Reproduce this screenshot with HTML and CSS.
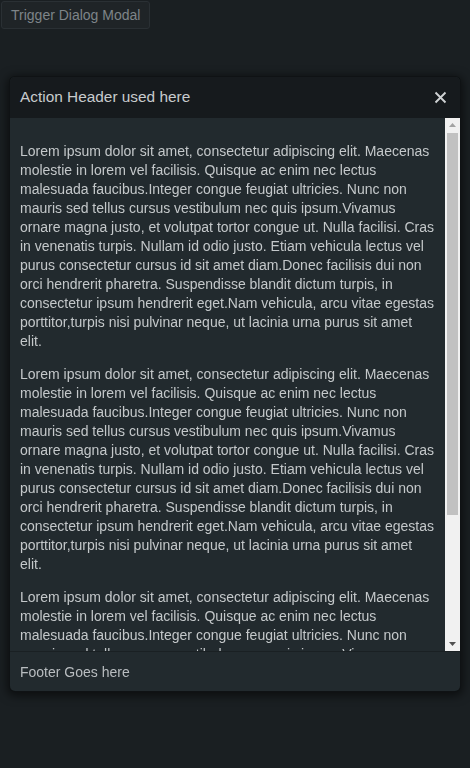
FILE: index.html
```html
<!DOCTYPE html>
<html lang="en">
<head>
<meta charset="utf-8">
<title>Dialog Modal</title>
<link rel="stylesheet" href="styles.css">
</head>
<body>
<button class="trigger" type="button">Trigger Dialog Modal</button>
<div class="overlay">
  <div class="modal" role="dialog">
    <div class="modal-header">
      <span class="modal-title">Action Header used here</span>
      <button class="close" type="button" aria-label="Close">
        <svg width="13" height="13" viewBox="0 0 13 13"><path d="M1.5 1.5L11.5 11.5M11.5 1.5L1.5 11.5" stroke="#cfd2d4" stroke-width="1.9" fill="none"/></svg>
      </button>
    </div>
    <div class="modal-main">
      <div class="modal-body">
        <p>Lorem ipsum dolor sit amet, consectetur adipiscing elit. Maecenas molestie in lorem vel facilisis. Quisque ac enim nec lectus malesuada faucibus.Integer congue feugiat ultricies. Nunc non mauris sed tellus cursus vestibulum nec quis ipsum.Vivamus ornare magna justo, et volutpat tortor congue ut. Nulla facilisi. Cras in venenatis turpis. Nullam id odio justo. Etiam vehicula lectus vel purus consectetur cursus id sit amet diam.Donec facilisis dui non orci hendrerit pharetra. Suspendisse blandit dictum turpis, in consectetur ipsum hendrerit eget.Nam vehicula, arcu vitae egestas porttitor,turpis nisi pulvinar neque, ut lacinia urna purus sit amet elit.</p>
        <p>Lorem ipsum dolor sit amet, consectetur adipiscing elit. Maecenas molestie in lorem vel facilisis. Quisque ac enim nec lectus malesuada faucibus.Integer congue feugiat ultricies. Nunc non mauris sed tellus cursus vestibulum nec quis ipsum.Vivamus ornare magna justo, et volutpat tortor congue ut. Nulla facilisi. Cras in venenatis turpis. Nullam id odio justo. Etiam vehicula lectus vel purus consectetur cursus id sit amet diam.Donec facilisis dui non orci hendrerit pharetra. Suspendisse blandit dictum turpis, in consectetur ipsum hendrerit eget.Nam vehicula, arcu vitae egestas porttitor,turpis nisi pulvinar neque, ut lacinia urna purus sit amet elit.</p>
        <p>Lorem ipsum dolor sit amet, consectetur adipiscing elit. Maecenas molestie in lorem vel facilisis. Quisque ac enim nec lectus malesuada faucibus.Integer congue feugiat ultricies. Nunc non mauris sed tellus cursus vestibulum nec quis ipsum.Vivamus ornare magna justo, et volutpat tortor congue ut. Nulla facilisi. Cras in venenatis turpis. Nullam id odio justo. Etiam vehicula lectus vel purus consectetur cursus id sit amet diam.Donec facilisis dui non orci hendrerit pharetra. Suspendisse blandit dictum turpis, in consectetur ipsum hendrerit eget.Nam vehicula, arcu vitae egestas porttitor,turpis nisi pulvinar neque, ut lacinia urna purus sit amet elit.</p>
      </div>
      <div class="scrollbar" aria-hidden="true">
        <div class="sb-btn">
          <svg width="7" height="4" viewBox="0 0 7 4"><polygon points="3.5,0 7,4 0,4" fill="#a3a3a3"/></svg>
        </div>
        <div class="sb-track"><div class="sb-thumb"></div></div>
        <div class="sb-btn">
          <svg width="7" height="4" viewBox="0 0 7 4"><polygon points="0,0 7,0 3.5,4" fill="#505050"/></svg>
        </div>
      </div>
    </div>
    <div class="modal-footer">Footer Goes here</div>
  </div>
</div>
</body>
</html>
```
FILE: styles.css
```css
html, body {
  margin: 0;
  height: 100%;
}
body {
  background: #1a1f22;
  font-family: "Liberation Sans", Arial, sans-serif;
  font-size: 14px;
  color: #c4c8ca;
}
.trigger {
  margin: 1px;
  height: 28px;
  padding: 0 9px;
  background: #1f2427;
  border: 1px solid #2a3034;
  border-radius: 3px;
  color: #7e8489;
  font-family: inherit;
  font-size: 14px;
}
.overlay {
  position: fixed;
  inset: 0;
  display: flex;
  align-items: center;
  justify-content: center;
}
.modal {
  width: calc(100% - 20px);
  height: 80%;
  display: flex;
  flex-direction: column;
  background: #222a2e;
  border-radius: 5px;
  box-shadow: 0 0 0 1px #0f1214, 0 2px 10px 3px rgba(0, 0, 0, 0.55);
  overflow: hidden;
}
.modal-header {
  flex: 0 0 41px;
  display: flex;
  align-items: center;
  justify-content: space-between;
  padding: 0 13px 0 10px;
  background: #161a1d;
}
.modal-title {
  font-size: 15.4px;
  color: #c8cbcd;
}
.close {
  background: none;
  border: 0;
  padding: 0;
  display: flex;
  cursor: pointer;
}
.modal-main {
  flex: 1 1 auto;
  min-height: 0;
  display: flex;
}
.modal-body {
  flex: 1 1 auto;
  min-width: 0;
  overflow: hidden;
  padding: 10px;
  line-height: 19px;
}
.modal-body p {
  margin: 14px 0;
}
.scrollbar {
  flex: 0 0 15px;
  display: flex;
  flex-direction: column;
  background: #f1f1f1;
}
.sb-btn {
  flex: 0 0 15px;
  display: flex;
  align-items: center;
  justify-content: center;
}
.sb-track {
  flex: 1 1 auto;
}
.sb-thumb {
  height: 382px;
  margin: 0 2px;
  background: #c1c1c1;
}
.modal-footer {
  flex: 0 0 39px;
  display: flex;
  align-items: center;
  padding: 0 10px;
  border-top: 1px solid #1a2023;
  color: #b9bdc0;
}
```
